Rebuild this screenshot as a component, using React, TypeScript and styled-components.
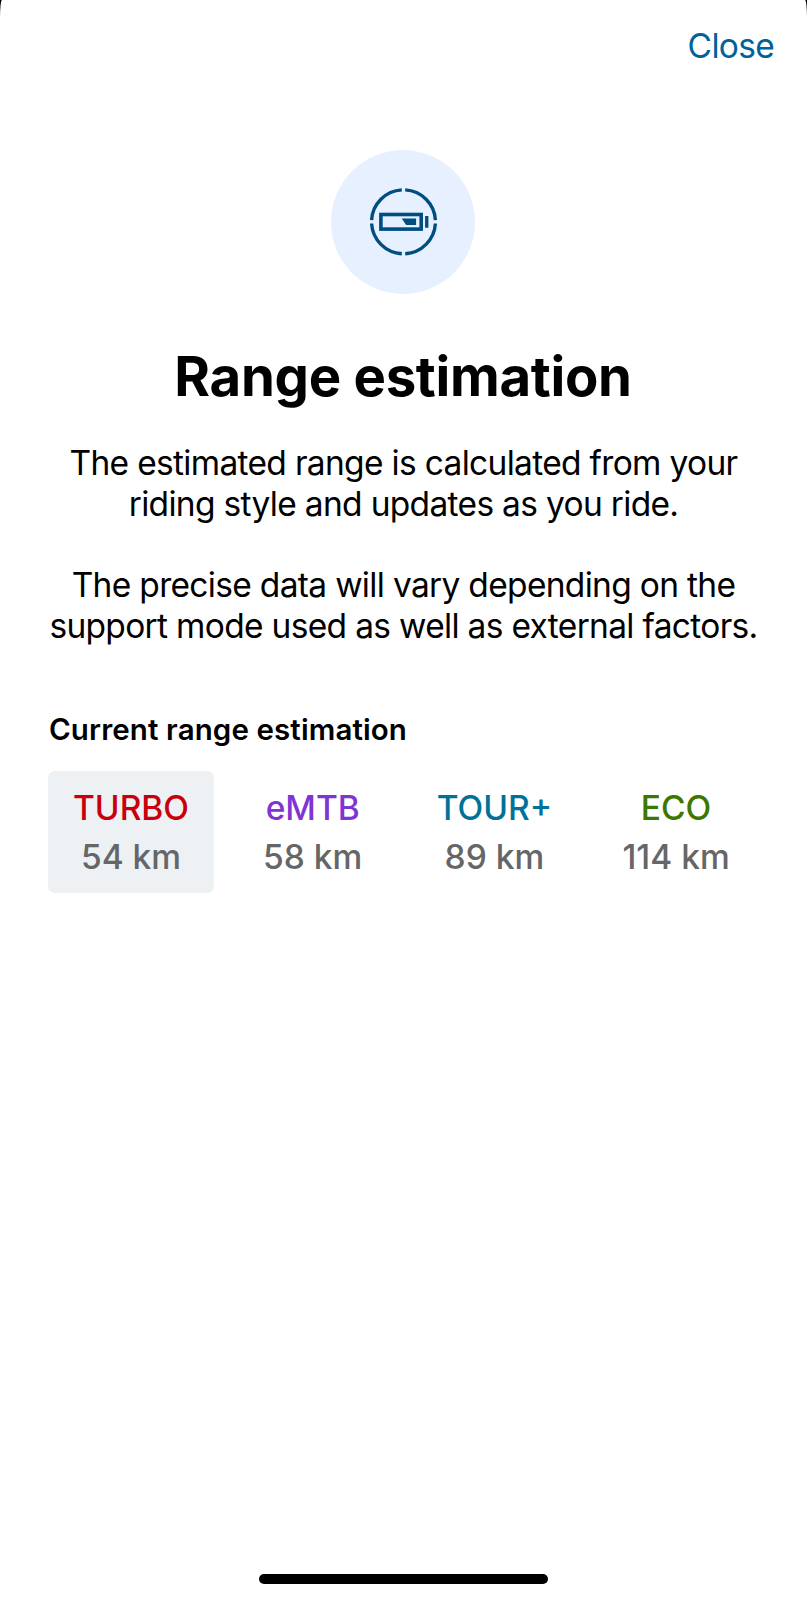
import React from "react";
import styled, { createGlobalStyle } from "styled-components";

const GlobalStyle = createGlobalStyle`
  * { box-sizing: border-box; }
  body {
    margin: 0;
    background: #000;
    font-family: Inter, "Liberation Sans", sans-serif;
    color: #000;
  }
`;

const Sheet = styled.main`
  display: flex;
  flex-direction: column;
  height: 1600px;
  background: #fff;
  border-radius: 2px 2px 0 0 / 18px 18px 0 0;
`;

const Header = styled.header`
  display: flex;
  justify-content: flex-end;
  padding: 26px 33px 0;
`;

const CloseButton = styled.button`
  padding: 0;
  border: 0;
  background: none;
  font: 400 33.5px/40px Inter, "Liberation Sans", sans-serif;
  letter-spacing: -0.7px;
  color: #00629a;
`;

const Badge = styled.div`
  display: flex;
  align-self: center;
  width: 144px;
  height: 144px;
  margin: 83.6px 0.4px 0 0;
  border-radius: 50%;
  background: #e6f0fe;
`;

const Title = styled.h1`
  margin: 50px 1px 0 0;
  font-size: 54.5px;
  font-weight: 700;
  line-height: 64px;
  letter-spacing: -0.3px;
  text-align: center;
`;

const Description = styled.div`
  display: grid;
  gap: 40.4px;
  margin-top: 35.4px;
`;

const Paragraph = styled.p`
  margin: 0;
  font-size: 33.5px;
  line-height: 41px;
  letter-spacing: -0.68px;
  text-align: center;
  white-space: nowrap;
`;

const Section = styled.section`
  padding: 0 48px;
  margin-top: 63.6px;
`;

const SectionTitle = styled.h2`
  margin: 0 0 24px 1px;
  font-size: 29.5px;
  font-weight: 600;
  line-height: 36px;
  letter-spacing: 0.11px;
`;

const Modes = styled.div`
  display: grid;
  grid-template-columns: repeat(4, 166px);
  gap: 15.7px;
`;

const Mode = styled.div<{ $active?: boolean }>`
  height: 122px;
  padding-top: 13px;
  border-radius: 7px;
  background: ${(p) => (p.$active ? "#edf1f3" : "transparent")};
  font-size: 33.5px;
  line-height: 49px;
  font-weight: 540;
  text-align: center;
  white-space: nowrap;
`;

const ModeName = styled.div<{ $color: string }>`
  color: ${(p) => p.$color};
`;

const ModeRange = styled.div`
  color: #656667;
`;

const HomeIndicator = styled.div`
  align-self: center;
  width: 289px;
  height: 10px;
  margin: auto 0 16px;
  border-radius: 5px;
  background: #000;
`;

const modes = [
  { name: "TURBO", range: "54 km", color: "#c9000c", active: true },
  { name: "eMTB", range: "58 km", color: "#8034d4" },
  { name: "TOUR+", range: "89 km", color: "#00729a" },
  { name: "ECO", range: "114 km", color: "#3a7800" },
];

const BatteryIcon = () => (
  <svg width="144" height="144" viewBox="-0.5 0.2 144 144" fill="none" stroke="#004d80" strokeWidth="3.4">
    <path d="M73.7 40.1A32 32 0 0 1 103.9 70.3M103.9 73.7A32 32 0 0 1 73.7 103.9M70.3 103.9A32 32 0 0 1 40.1 73.7M40.1 70.3A32 32 0 0 1 70.3 40.1" />
    <rect x="49.4" y="64.7" width="40.3" height="14.6" strokeWidth="3.6" />
    <path d="M70.2 68.6H84.6V75.2H74.6ZM93.6 66.3H96.9V78H93.6Z" fill="#004d80" stroke="none" />
  </svg>
);

export default function App() {
  return (
    <>
      <GlobalStyle />
      <Sheet>
        <Header>
          <CloseButton>Close</CloseButton>
        </Header>
        <Badge>
          <BatteryIcon />
        </Badge>
        <Title>Range estimation</Title>
        <Description>
          <Paragraph>
            The estimated range is calculated from your
            <br />
            riding style and updates as you ride.
          </Paragraph>
          <Paragraph>
            The precise data will vary depending on the
            <br />
            support mode used as well as external factors.
          </Paragraph>
        </Description>
        <Section>
          <SectionTitle>Current range estimation</SectionTitle>
          <Modes>
            {modes.map((m) => (
              <Mode key={m.name} $active={m.active}>
                <ModeName $color={m.color}>{m.name}</ModeName>
                <ModeRange>{m.range}</ModeRange>
              </Mode>
            ))}
          </Modes>
        </Section>
        <HomeIndicator />
      </Sheet>
    </>
  );
}
